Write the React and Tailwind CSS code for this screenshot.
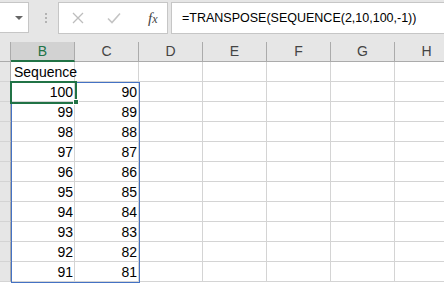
const cols = ['B', 'C', 'D', 'E', 'F', 'G', 'H']
const rows = [
  ['Sequence', ''],
  [100, 90],
  [99, 89],
  [98, 88],
  [97, 87],
  [96, 86],
  [95, 85],
  [94, 84],
  [93, 83],
  [92, 82],
  [91, 81],
]

export default function App() {
  return (
    <div className="relative h-[289px] w-[444px] overflow-hidden bg-white font-['Liberation_Sans',Arial,sans-serif]">
      <FormulaBar />

      <div className="h-[42px] bg-[#e6e6e6]" />

      <div className="flex h-[20px]">
        <div className="h-full w-[11px] shrink-0 border-r border-b border-[#ababab] bg-[#e6e6e6]" />
        {cols.map((c) => (
          <div
            key={c}
            className={
              c === 'B'
                ? 'flex h-full w-[64px] shrink-0 items-center justify-center border-r border-b-2 border-r-[#ababab] border-b-[#217346] bg-[#d2d2d2] text-[14px] text-[#217346]'
                : 'flex h-full w-[64px] shrink-0 items-center justify-center border-r border-b border-[#ababab] bg-[#e6e6e6] text-[14px] text-[#444]'
            }
          >
            {c}
          </div>
        ))}
      </div>

      {rows.map((r, i) => (
        <div key={i} className="flex h-[20px]">
          <div className="h-full w-[11px] shrink-0 border-r border-b border-[#d4d4d4] border-r-[#ababab] bg-[#e6e6e6]" />
          {cols.map((c, j) => (
            <div
              key={c}
              className={`flex h-full w-[64px] shrink-0 items-center border-r border-b border-[#d4d4d4] pr-[1px] pl-[3px] text-[14px] leading-none text-black ${typeof r[j] === 'number' ? 'justify-end' : 'justify-start'}`}
            >
              {r[j] ?? ''}
            </div>
          ))}
        </div>
      ))}

      {/* selected range */}
      <div className="pointer-events-none absolute top-[82px] left-[11px] h-[201px] w-[129px] border border-[#4472c4]" />
      {/* active cell */}
      <div className="pointer-events-none absolute top-[81px] left-[10px] h-[23px] w-[67px] border-2 border-[#217346]" />
      <div className="absolute top-[99px] left-[73px] h-[6px] w-[6px] border border-white bg-[#217346]" />
    </div>
  )
}

function FormulaBar() {
  return (
    <div className="absolute top-0 left-0 flex h-[36px] w-full items-start bg-[#e6e6e6] pt-[2px]">
      <div className="relative -ml-[10px] h-[31px] w-[39px] border border-[#c6c6c6] bg-white">
        <svg className="absolute top-[13px] left-[24px]" width="8" height="5" viewBox="0 0 8 5">
          <path d="M0 0h8L4 4z" fill="#666" />
        </svg>
      </div>
      <div className="ml-[13px] flex h-[31px] w-[8px] flex-col items-center justify-center gap-[2px]">
        <span className="h-[2px] w-[2px] bg-[#b3b3b3]" />
        <span className="h-[2px] w-[2px] bg-[#b3b3b3]" />
        <span className="h-[2px] w-[2px] bg-[#b3b3b3]" />
      </div>
      <div className="ml-[8px] flex h-[32px] w-[110px] items-center border border-[#c6c6c6] bg-white">
        <svg className="ml-[13px]" width="12" height="12" viewBox="0 0 12 12">
          <path d="M1 1l10 10M11 1L1 11" stroke="#bdbdbd" strokeWidth="1.3" fill="none" />
        </svg>
        <svg className="ml-[23px]" width="14" height="12" viewBox="0 0 14 12">
          <path d="M1 6.5l4 4L13 1.5" stroke="#c4c4c4" strokeWidth="1.6" fill="none" />
        </svg>
        <span className="ml-[27px] font-['Liberation_Serif',serif] text-[15px] italic leading-none text-[#444]">
          f<span className="text-[12px]">x</span>
        </span>
      </div>
      <div className="ml-[3px] flex h-[32px] flex-1 items-center border border-r-0 border-[#c6c6c6] bg-white pl-[10px] text-[12.5px] text-black">
        =TRANSPOSE(SEQUENCE(2,10,100,-1))
      </div>
    </div>
  )
}
